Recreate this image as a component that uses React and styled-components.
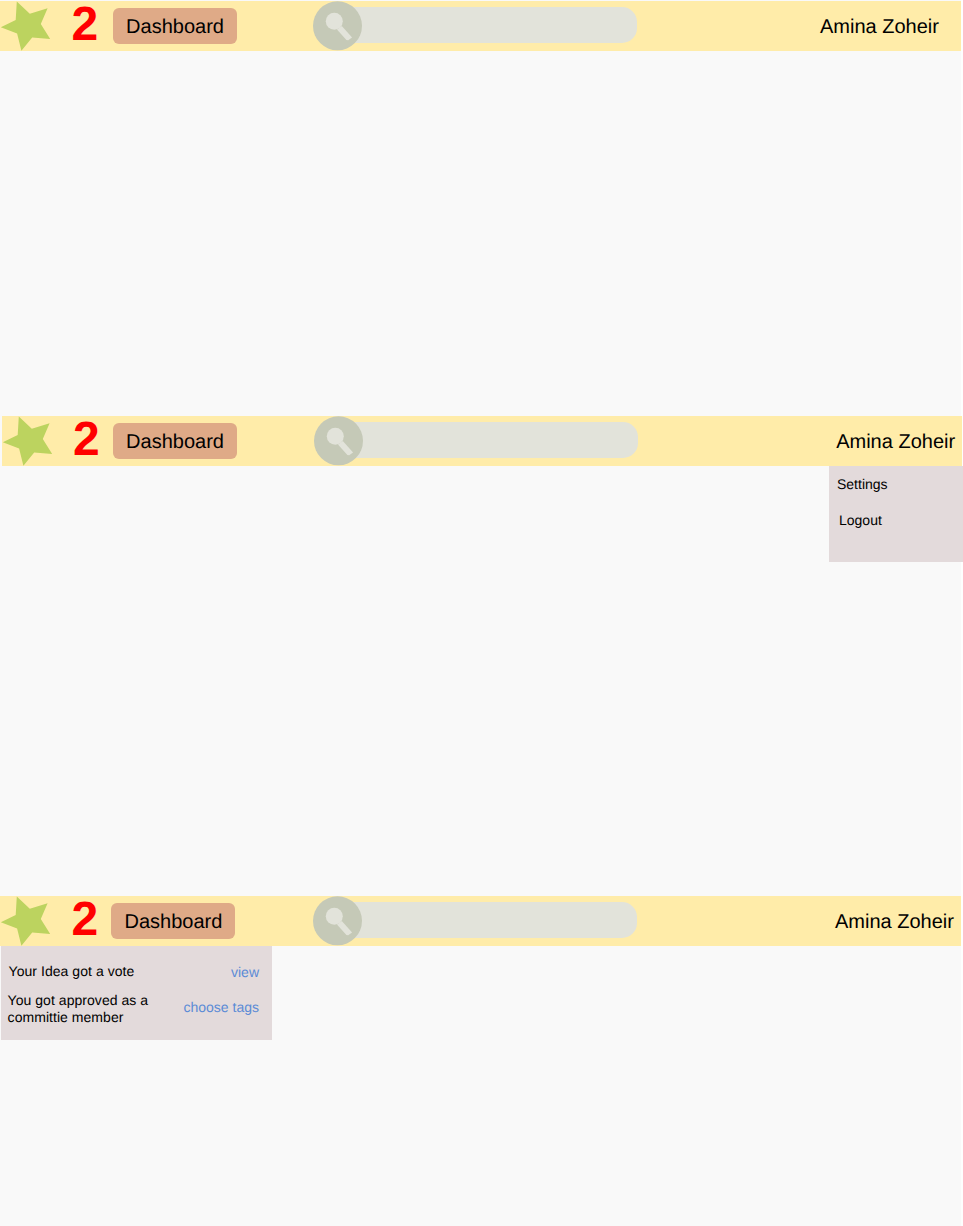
import React from "react";
import styled, { createGlobalStyle } from "styled-components";

const GlobalStyle = createGlobalStyle`
  * { box-sizing: border-box; }
  body {
    margin: 0;
    background: #ffffff;
    color: #000;
    font-family: "Liberation Sans", Arial, sans-serif;
    text-rendering: geometricPrecision;
  }
`;

const Page = styled.main`
  display: flex;
  flex-direction: column;
  width: 963px;
  height: 1226px;
  padding-top: 1px;
  background: linear-gradient(to right, #f9f9f9 961px, #fefefe 961px);
`;

const Screen = styled.section`
  display: flex;
  flex-direction: column;
  flex: none;
  height: ${(p) => p.$height}px;
`;

const TopBar = styled.header`
  display: flex;
  align-items: flex-start;
  flex: none;
  width: 960.5px;
  height: 50px;
  margin-left: ${(p) => p.$shift || 0}px;
  background: #ffeca9;
`;

const Logo = styled.svg`
  display: block;
  flex: none;
  width: 52px;
  height: 50px;
`;

const Count = styled.strong`
  flex: none;
  width: 27px;
  margin: -3px 0 0 19.5px;
  font-size: 48px;
  line-height: 54px;
  color: #ff0000;
`;

const DashboardButton = styled.button`
  flex: none;
  width: 124px;
  height: 36px;
  margin: 7px 0 0 ${(p) => p.$gap}px;
  padding: 1px 0 0;
  border: 0;
  border-radius: 6px;
  background: #dfaa87;
  color: #000;
  font: 20px/35px "Liberation Sans", Arial, sans-serif;
  text-align: center;
`;

const Search = styled.div`
  display: flex;
  flex: none;
  width: 324px;
  height: 50px;
  margin-left: ${(p) => p.$gap}px;
`;

const SearchIcon = styled.svg`
  position: relative;
  display: block;
  flex: none;
  width: 50px;
  height: 50px;
`;

const SearchField = styled.div`
  flex: 1;
  height: 36px;
  margin: 6px 0 0 -10px;
  border-radius: 0 15px 15px 0;
  background: #e2e3da;
`;

const UserName = styled.span`
  margin: 15px ${(p) => p.$right}px 0 auto;
  font-size: 20px;
  line-height: 23px;
  white-space: nowrap;
`;

const ButtonLabel = styled.span`
  display: block;
  padding-top: 1px;
  line-height: 35px;
  text-rendering: geometricPrecision;
`;

const UserMenu = styled.nav`
  display: flex;
  flex-direction: column;
  align-self: flex-end;
  gap: 20px;
  width: 134px;
  height: 96px;
  padding: 10px 8px;
  background: #e3dadb;
`;

const MenuItem = styled.a`
  margin-left: ${(p) => p.$indent || 0}px;
  font-size: 14px;
  line-height: 16px;
`;

const Notifications = styled.div`
  display: flex;
  flex-direction: column;
  gap: 10px;
  width: 271px;
  height: 94.4px;
  margin-left: 1px;
  padding: 17px 13px 0 6.6px;
  background: #e3dadb;
`;

const Notification = styled.div`
  display: flex;
  justify-content: space-between;
  font-size: 14px;
  line-height: 17.5px;
`;

const Message = styled.span`
  width: 150px;
  margin-left: ${(p) => p.$indent || 0}px;
  letter-spacing: 0.045px;
`;

const Action = styled.a`
  margin-top: ${(p) => p.$drop}px;
  color: #5b8bd6;
  white-space: nowrap;
`;

function Header({ shift = 0, buttonGap = 14.5, searchGap = 76, nameRight }) {
  return (
    <TopBar $shift={shift}>
      <Logo viewBox="0 0 52 50">
        <polygon
          fill="#bcd35f"
          points="0.8,26.3 15.7,19 16.8,0.6 29.8,12.8 47.6,7.2 40.8,23 50.2,38 32.2,36.5 21.4,49.8 17.1,32.4"
        />
      </Logo>
      <Count>2</Count>
      <DashboardButton $gap={buttonGap}>
        <ButtonLabel>Dashboard</ButtonLabel>
      </DashboardButton>
      <Search $gap={searchGap}>
        <SearchIcon viewBox="0 0 50 50">
          <circle cx="24.5" cy="24.8" r="24.5" fill="#c5c9b7" />
          <circle cx="21.3" cy="20.3" r="8.5" fill="#e2e3da" />
          <path d="M24 28.6 L28.8 25 L39.1 36.6 L35.2 39.3 L33.4 39.1 Z" fill="#e2e3da" />
        </SearchIcon>
        <SearchField />
      </Search>
      <UserName $right={nameRight}>Amina Zoheir</UserName>
    </TopBar>
  );
}

export default function App() {
  return (
    <>
      <GlobalStyle />
      <Page>
        <Screen $height={415}>
          <Header nameRight={21.6} />
        </Screen>
        <Screen $height={480}>
          <Header shift={1.5} buttonGap={13} searchGap={77.2} nameRight={6.9} />
          <UserMenu>
            <MenuItem>Settings</MenuItem>
            <MenuItem $indent={2}>Logout</MenuItem>
          </UserMenu>
        </Screen>
        <Screen $height={330}>
          <Header buttonGap={12.9} searchGap={77.6} nameRight={6.6} />
          <Notifications>
            <Notification>
              <Message $indent={1}>Your Idea got a vote</Message>
              <Action $drop={1}>view</Action>
            </Notification>
            <Notification>
              <Message>You got approved as a committie member</Message>
              <Action $drop={7}>choose tags</Action>
            </Notification>
          </Notifications>
        </Screen>
      </Page>
    </>
  );
}
